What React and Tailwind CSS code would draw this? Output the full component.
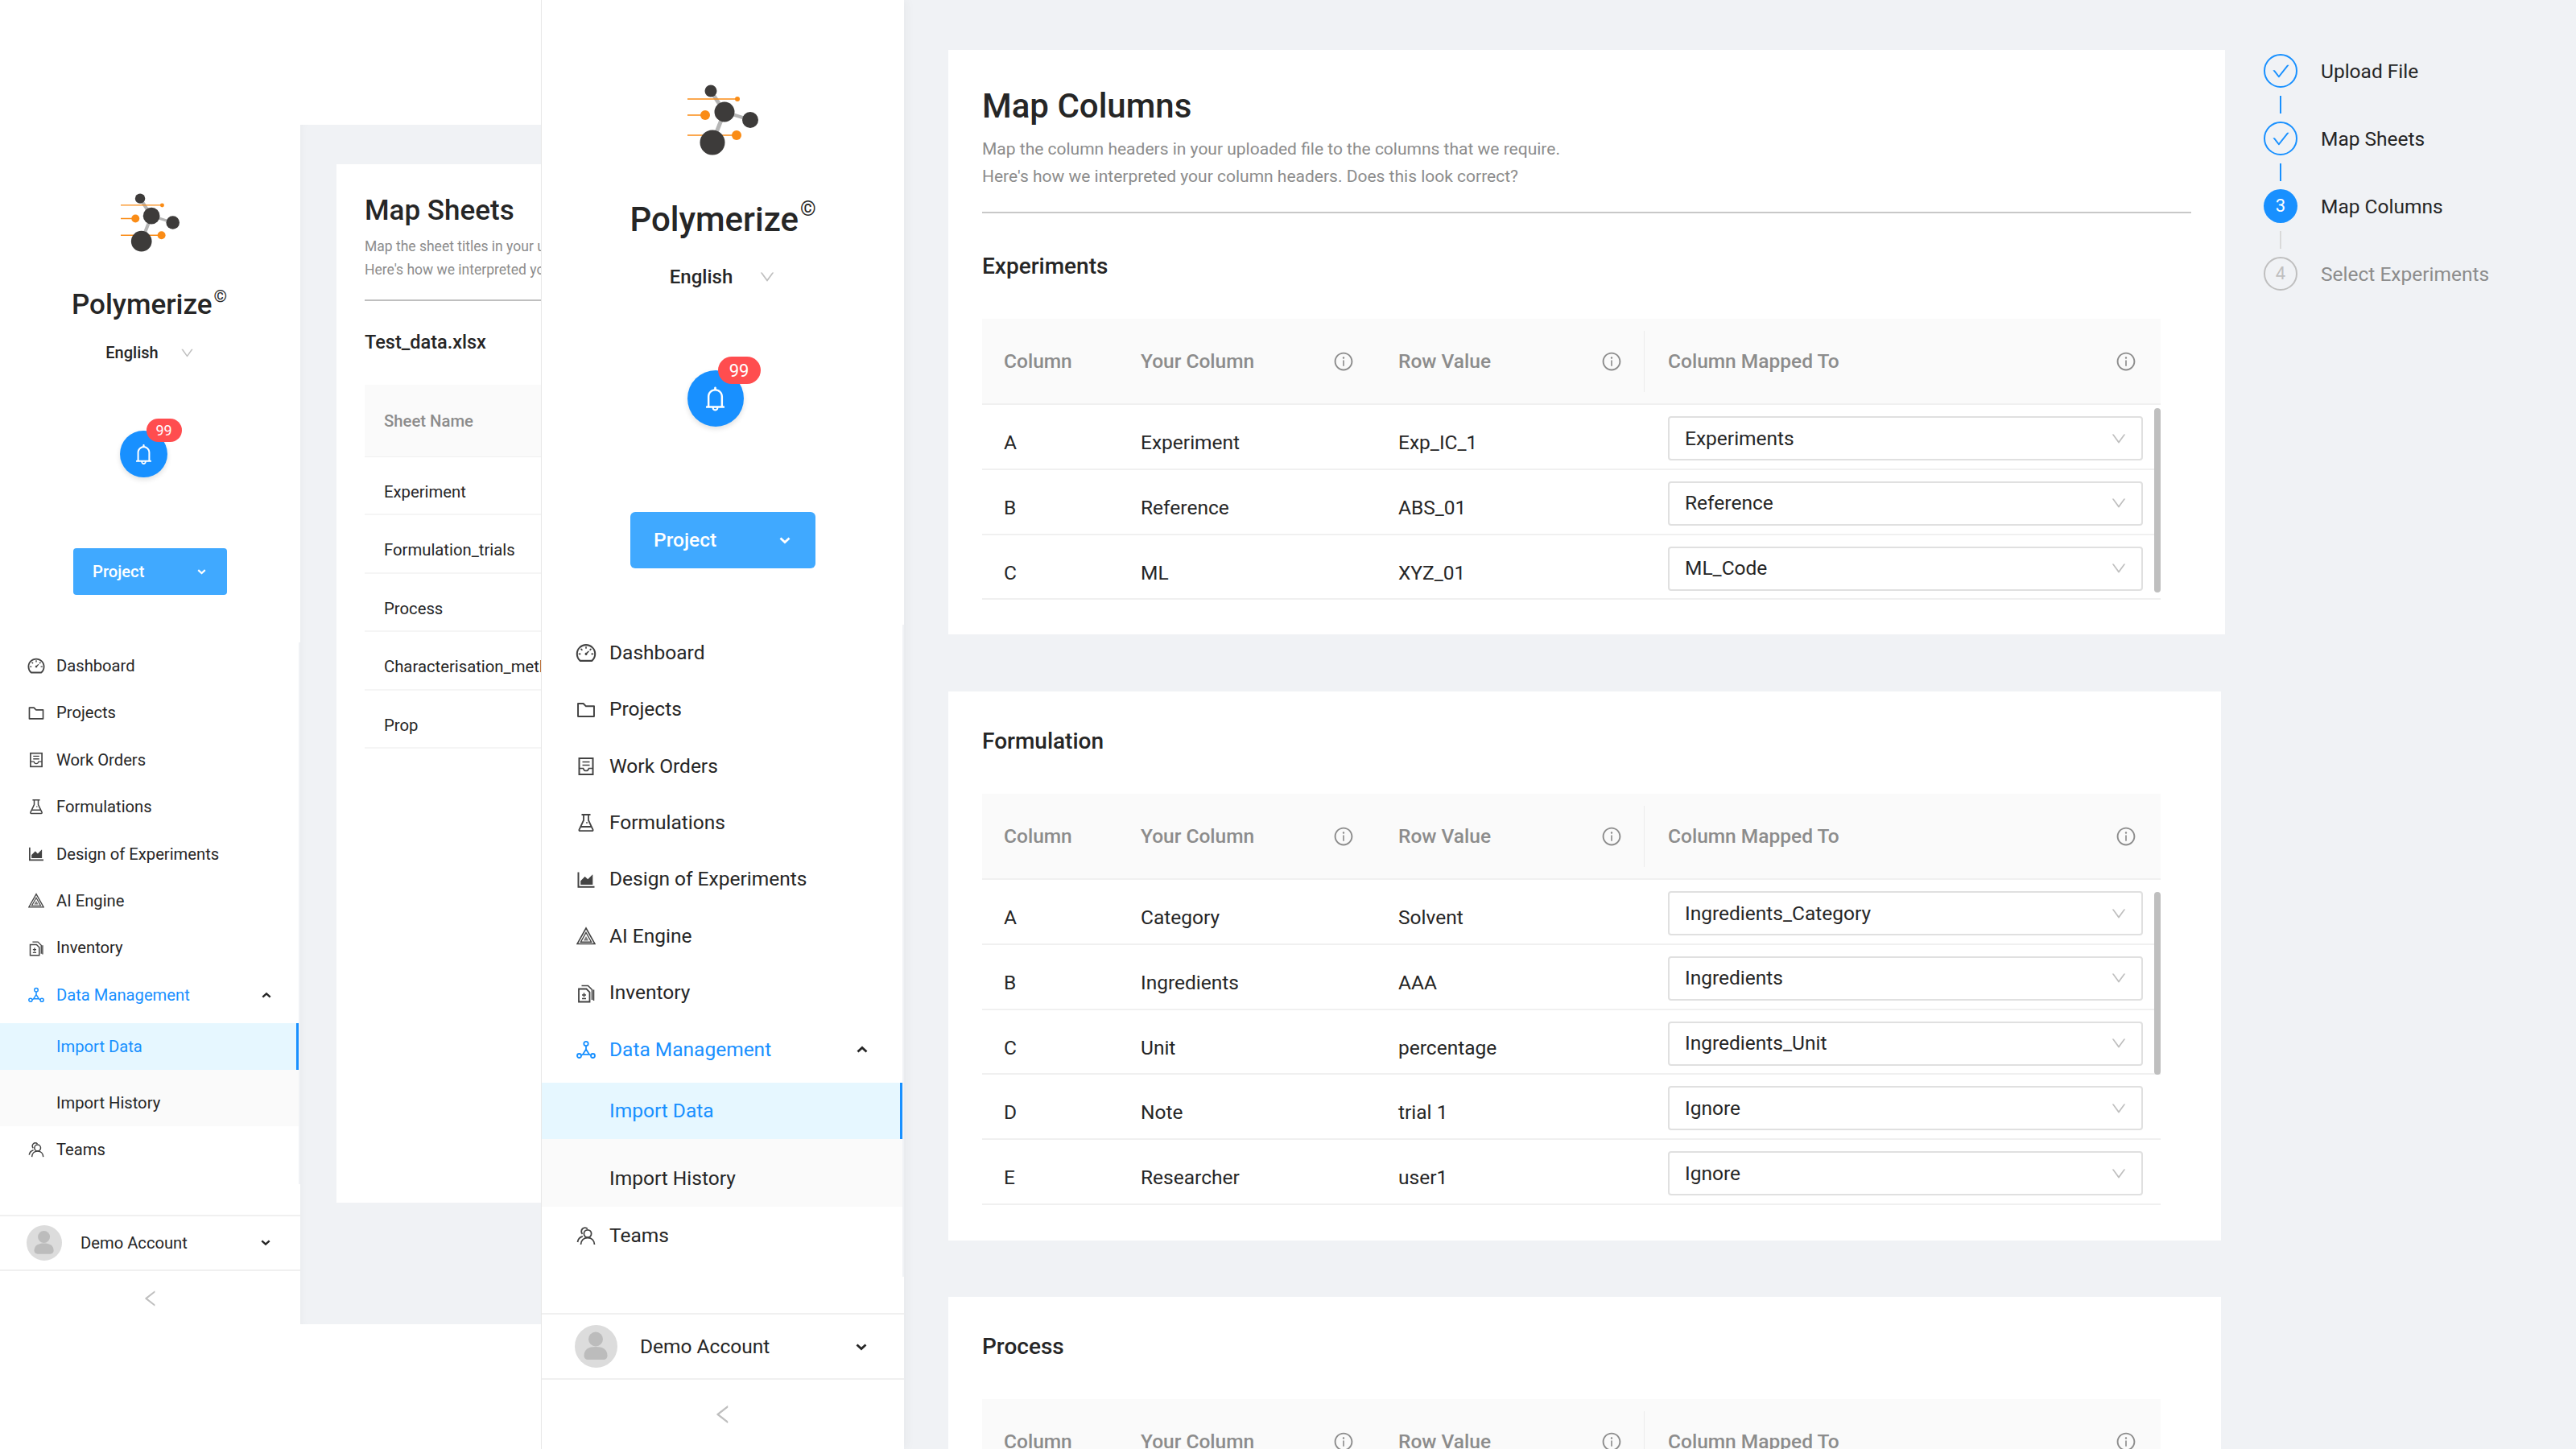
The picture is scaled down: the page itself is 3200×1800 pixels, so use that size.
import {
  AiOutlineAreaChart,
  AiOutlineBell,
  AiOutlineCheck,
  AiOutlineDashboard,
  AiOutlineDown,
  AiOutlineFolder,
  AiOutlineInfoCircle,
  AiOutlineLeft,
} from "react-icons/ai";

function Logo({ className }) {
  return (
    <svg viewBox="0 0 88 88" className={className}>
      <path d="M29 8L46 34L31 72" stroke="#b5b5b5" strokeWidth="5" fill="none" />
      <path d="M46 34L78 44" stroke="#b5b5b5" strokeWidth="4" fill="none" />
      <path d="M0 18H62M0 38H22M0 63H61" stroke="#fa8c16" strokeWidth="1.6" fill="none" />
      <circle cx="62" cy="18" r="3" fill="#fa8c16" />
      <circle cx="22" cy="38" r="6" fill="#fa8c16" />
      <circle cx="61" cy="63" r="6" fill="#fa8c16" />
      <circle cx="29" cy="8" r="7.5" fill="#3d3b3a" />
      <circle cx="46" cy="34" r="12.5" fill="#3d3b3a" />
      <circle cx="78" cy="44" r="10" fill="#3d3b3a" />
      <circle cx="31" cy="72" r="15.5" fill="#3d3b3a" />
    </svg>
  );
}

function WorkOrderIcon({ size }) {
  return (
    <svg width={size} height={size} viewBox="0 0 24 24" fill="none" stroke="currentColor" strokeWidth="2">
      <rect x="3.500" y="2" width="17" height="20" />
      <path d="M7.500 6.500h9M7.500 10.500h9" strokeWidth="1.600" />
      <path d="M3.500 14.500h5c.5 2 1.700 3 3.500 3s3-1 3.500-3h5" strokeWidth="1.600" />
    </svg>
  );
}

function FlaskIcon({ size }) {
  return (
    <svg width={size} height={size} viewBox="0 0 24 24" fill="none" stroke="currentColor" strokeWidth="1.800">
      <path d="M6.500 2h11M9 2v7L3.500 20.500c-.4 1 .2 1.700 1 1.700h15c.8 0 1.400-.7 1-1.700L15 9V2M6 17h12" />
      <circle cx="13" cy="12" r="0.900" fill="currentColor" stroke="none" />
    </svg>
  );
}

function PyramidIcon({ size }) {
  return (
    <svg width={size} height={size} viewBox="0 0 24 24" fill="none" stroke="currentColor">
      <path d="M12 2L23 21.500H1Z" strokeWidth="1.600" />
      <path d="M12 7.500L18.600 19.200H5.400Z" strokeWidth="1.400" />
      <path d="M12 12L15.200 17.500H8.800Z" fill="currentColor" stroke="none" opacity="0.7" />
    </svg>
  );
}

function InventoryIcon({ size }) {
  return (
    <svg width={size} height={size} viewBox="0 0 24 24" fill="none" stroke="currentColor" strokeWidth="1.600">
      <path d="M3 6.500h9.500l4 4V22.500H3Z" strokeWidth="1.800" />
      <path d="M9.500 11.500v5M7 14h5M7 18.500h5" />
      <path d="M6.500 2.500h8l5 5V20" />
      <path d="M21.500 7.500V21" />
    </svg>
  );
}

function NetworkIcon({ size }) {
  return (
    <svg width={size} height={size} viewBox="0 0 24 24" fill="none" stroke="currentColor" strokeWidth="1.800">
      <circle cx="12" cy="4.500" r="2.700" />
      <circle cx="3.500" cy="19.500" r="2.500" />
      <circle cx="20.500" cy="19.500" r="2.500" />
      <path d="M12 7.200V11.500M12 11.500L16 17.800H8ZM6 19L8 17.800M18 19L16 17.800" />
    </svg>
  );
}

function TeamIcon({ size }) {
  return (
    <svg width={size} height={size} viewBox="0 0 24 24" fill="none" stroke="currentColor" strokeWidth="1.800">
      <circle cx="14" cy="9.500" r="4.600" />
      <path d="M5.500 23c.3-5 3.600-8.500 8.500-8.500s8.200 3.500 8.500 8.500" />
      <path d="M7.500 9.800A4.300 4.300 0 1 1 13.800 3.500M7.800 12.800C4 13.800 2 16.500 1.500 20" />
    </svg>
  );
}

function BoldChevron({ up, className }) {
  return (
    <svg viewBox="0 0 14 9" className={className} fill="none" stroke="currentColor" strokeWidth="2.800">
      <path d={up ? "M1.500 7.500L7 2.500L12.500 7.500" : "M1.500 1.500L7 6.500L12.500 1.500"} />
    </svg>
  );
}

function Avatar({ className }) {
  return (
    <svg viewBox="0 0 53 53" className={className}>
      <circle cx="26.500" cy="26.500" r="26.500" fill="#dcdcdc" />
      <circle cx="26" cy="17.500" r="9" fill="#bcbcbc" />
      <path d="M11.500 38c0-8 6-11 14.500-11s14.500 3 14.500 11c0 3-2 5-5 5h-19c-3 0-5-2-5-5Z" fill="#bcbcbc" />
    </svg>
  );
}

// the antd outline icons sit inside a padded 1024 box, so they get drawn a bit larger
const navItems = [
  { label: "Dashboard", Icon: AiOutlineDashboard, padded: true },
  { label: "Projects", Icon: AiOutlineFolder, padded: true },
  { label: "Work Orders", Icon: WorkOrderIcon },
  { label: "Formulations", Icon: FlaskIcon },
  { label: "Design of Experiments", Icon: AiOutlineAreaChart, padded: true },
  { label: "AI Engine", Icon: PyramidIcon },
  { label: "Inventory", Icon: InventoryIcon },
];

// the two sidebars are the same thing at two zoom levels
const wide = {
  root: "w-[451px] border-l border-[#e8e8e8] pt-[105px] shadow-[5px_0_10px_rgba(0,0,0,0.03)]",
  logo: "w-[88px] h-[88px]",
  title: "mt-[56px] text-[42px] leading-[48px]",
  copy: "text-[25px] leading-[26px] ml-[2px] -mt-[2px]",
  lang: "mt-[31px] text-[24px] leading-[32px] gap-[32px]",
  langChevron: "w-[22px] h-[22px]",
  bell: "mt-[100px] w-[70px] h-[70px] mr-[19px]",
  bellIcon: "w-[35px] h-[35px]",
  badge: "left-[38px] -top-[17px] w-[53px] h-[34px] text-[22px]",
  project: "mt-[106px] w-[230px] h-[70px] pl-[29px] pr-[31px] text-[24.500px] rounded-[6px]",
  projectChevron: "w-[14px] h-[9px]",
  nav: "mt-[70px] h-[811px] text-[24.500px]",
  row: "h-[70.400px] pl-[43px] gap-[17px]",
  groupChevron: "ml-[89px] w-[14px] h-[9px]",
  sub: "h-[70px] pl-[84px] mt-[6px] border-r-[3px]",
  subHistory: "h-[84px] pl-[84px] pt-[14px]",
  teams: "pt-[2px]",
  user: "mt-[45px] h-[83px] pl-[41px] pt-[2px] text-[24.500px] border-y-2",
  avatar: "w-[53px] h-[53px] -mt-[2px]",
  userName: "ml-[28px] w-[268px]",
  userChevron: "w-[14px] h-[9px]",
  back: "h-[86px]",
  backIcon: "w-[30px] h-[30px]",
  icon: 24,
  paddedIcon: 28,
  paddedGap: "-mx-[2px]",
};

const narrow = {
  root: "w-[373px] pt-[240px]",
  logo: "w-[73px] h-[73px]",
  title: "mt-[46px] text-[35px] leading-[40px] -ml-[2px]",
  copy: "text-[21px] leading-[22px] ml-[2px] -mt-[2px]",
  lang: "mt-[26px] text-[20px] leading-[27px] gap-[26px]",
  langChevron: "w-[19px] h-[19px]",
  bell: "mt-[83px] w-[59px] h-[58px] mr-[17px]",
  bellIcon: "w-[29px] h-[29px]",
  badge: "left-[33px] -top-[15px] w-[44px] h-[29px] text-[18px]",
  project: "mt-[88px] w-[191px] h-[58px] pl-[24px] pr-[26px] text-[20.200px] rounded-[4px]",
  projectChevron: "w-[11px] h-[7px]",
  nav: "mt-[59px] h-[673px] text-[20.200px]",
  row: "h-[58.400px] pl-[35px] gap-[15px]",
  groupChevron: "ml-[74px] w-[12px] h-[8px]",
  sub: "h-[58px] pl-[70px] mt-[6px] border-r-[3px]",
  subHistory: "h-[70px] pl-[70px] pt-[12px]",
  teams: "",
  user: "mt-[38px] h-[70px] pl-[33px] text-[20.200px] border-y-2",
  avatar: "w-[44px] h-[44px]",
  userName: "ml-[23px] w-[224px]",
  userChevron: "w-[12px] h-[8px]",
  back: "h-[67px]",
  backIcon: "w-[26px] h-[26px]",
  icon: 20,
  paddedIcon: 24,
  paddedGap: "-mx-[2px]",
};

function Sidebar({ s }) {
  return (
    <aside className={`relative z-10 shrink-0 h-full bg-white flex flex-col ${s.root}`}>
      <div className="flex flex-col items-center">
        <Logo className={s.logo} />
        <div className={`flex items-start text-[#262626] font-medium ${s.title}`}>
          Polymerize
          <span className={`font-normal ${s.copy}`}>©</span>
        </div>
        <div className={`flex items-center text-[#262626] font-medium ${s.lang}`}>
          English
          <AiOutlineDown className={`text-[#bfbfbf] ${s.langChevron}`} />
        </div>
        <div className={`relative rounded-full bg-[#1890ff] flex items-center justify-center shadow-[0_3px_6px_rgba(0,0,0,0.12)] ${s.bell}`}>
          <AiOutlineBell className={`text-white ${s.bellIcon}`} />
          <div className={`absolute rounded-full bg-[#ff4d4f] text-white flex items-center justify-center ${s.badge}`}>99</div>
        </div>
        <div className={`bg-[#40a9ff] text-white font-medium flex items-center justify-between ${s.project}`}>
          Project
          <BoldChevron className={s.projectChevron} />
        </div>
      </div>

      <nav className={`border-r-2 border-[#f0f2f5] text-[#262626] ${s.nav}`}>
        {navItems.map(({ label, Icon, padded }) => (
          <div key={label} className={`flex items-center ${s.row}`}>
            <span className={`text-[#434343] flex ${padded ? s.paddedGap : ""}`}>
              <Icon size={padded ? s.paddedIcon : s.icon} />
            </span>
            {label}
          </div>
        ))}
        <div className={`flex items-center text-[#1890ff] ${s.row}`}>
          <NetworkIcon size={s.icon} />
          <span className="whitespace-nowrap">Data Management</span>
          <BoldChevron up className={`text-[#262626] shrink-0 ${s.groupChevron}`} />
        </div>
        <div className={`flex items-center bg-[#e6f7ff] text-[#1890ff] border-[#1890ff] ${s.sub}`}>Import Data</div>
        <div className={`flex items-center bg-[#fafafa] ${s.subHistory}`}>Import History</div>
        <div className={`flex items-center ${s.row} ${s.teams}`}>
          <span className="text-[#434343] flex">
            <TeamIcon size={s.icon} />
          </span>
          Teams
        </div>
      </nav>

      <div className={`flex items-center text-[#262626] border-[#f0f0f0] ${s.user}`}>
        <Avatar className={s.avatar} />
        <span className={s.userName}>Demo Account</span>
        <BoldChevron className={s.userChevron} />
      </div>
      <div className={`flex items-center justify-center ${s.back}`}>
        <AiOutlineLeft className={`text-[#bfbfbf] ${s.backIcon}`} />
      </div>
    </aside>
  );
}

const sheetNames = ["Experiment", "Formulation_trials", "Process", "Characterisation_methods", "Prop"];

function MapSheetsPreview() {
  return (
    <div className="flex-1 min-w-0">
      <div className="h-[155px] bg-white" />
      <div className="h-[1490px] bg-[#f0f2f5] pt-[49px] pl-[45px] overflow-hidden shadow-[inset_8px_0_10px_-6px_rgba(0,0,0,0.03)]">
        <div className="h-[1290px] w-[700px] bg-white pl-[35px] pt-[38px] whitespace-nowrap">
          <h2 className="text-[35px] leading-[40px] font-medium text-[#262626]">Map Sheets</h2>
          <p className="mt-[10px] text-[17.500px] leading-[29px] text-[#8c8c8c]">
            Map the sheet titles in your uploaded file to the sheets that we require.
            <br />
            Here's how we interpreted your sheet titles. Does this look correct?
          </p>
          <div className="mt-[22px] border-t-2 border-[#bfbfbf]" />
          <div className="mt-[36px] text-[23.500px] leading-[30px] font-medium text-[#262626]">Test_data.xlsx</div>
          <div className="mt-[38px] h-[90px] pt-[2px] bg-[#fafafa] border-b border-[#f0f0f0] pl-[24px] flex items-center text-[20.300px] font-medium text-[#8c8c8c]">
            Sheet Name
          </div>
          {sheetNames.map((name) => (
            <div key={name} className="h-[72.400px] border-b-2 border-[#f5f5f5] pl-[24px] pt-[30px] text-[20.300px] leading-[26px] text-[#262626]">
              {name}
            </div>
          ))}
        </div>
      </div>
    </div>
  );
}

function HeaderCell({ label, info, className }) {
  return (
    <div className={`flex items-center justify-between pl-[27px] ${className}`}>
      <span className="pt-[2px]">{label}</span>
      {info && <AiOutlineInfoCircle className="w-[26px] h-[26px] text-[#8c8c8c] shrink-0" />}
    </div>
  );
}

function MappingTable({ rows, barClass, headerMargin }) {
  return (
    <div className={`w-[1464px] ${headerMargin}`}>
      <div className="grid grid-cols-[170px_320px_335px_639px] h-[107px] bg-[#fafafa] border-b-2 border-[#f0f0f0] text-[24.500px] font-medium text-[#8c8c8c]">
        <HeaderCell label="Column" />
        <HeaderCell label="Your Column" info className="pr-[28px]" />
        <HeaderCell label="Row Value" info className="pr-[30px]" />
        <div className="relative flex items-center">
          <div className="absolute -left-[3px] top-[15px] h-[76px] w-px bg-[#ececec]" />
          <HeaderCell label="Column Mapped To" info className="w-full pr-[30px]" />
        </div>
      </div>
      <div className="relative">
        {rows.map((row) => (
          <div key={row[0]} className="grid grid-cols-[170px_320px_335px_639px] h-[80.800px] border-b-2 border-[#f0f0f0] text-[24.500px] leading-[28px] text-[#262626]">
            <div className="pl-[27px] pt-[33px]">{row[0]}</div>
            <div className="pl-[27px] pt-[33px]">{row[1]}</div>
            <div className="pl-[27px] pt-[33px]">{row[2]}</div>
            <div className="pl-[27px] pr-[22px] pt-[14px]">
              <div className="h-[55px] border-2 border-[#e0e0e0] rounded-[4px] pl-[19px] pr-[17px] flex items-center justify-between">
                {row[3]}
                <AiOutlineDown className="w-[22px] h-[22px] text-[#bfbfbf]" />
              </div>
            </div>
          </div>
        ))}
        <div className={`absolute right-0 w-[8px] rounded-full bg-[#bfbfbf] ${barClass}`} />
      </div>
    </div>
  );
}

const experimentRows = [
  ["A", "Experiment", "Exp_IC_1", "Experiments"],
  ["B", "Reference", "ABS_01", "Reference"],
  ["C", "ML", "XYZ_01", "ML_Code"],
];

const formulationRows = [
  ["A", "Category", "Solvent", "Ingredients_Category"],
  ["B", "Ingredients", "AAA", "Ingredients"],
  ["C", "Unit", "percentage", "Ingredients_Unit"],
  ["D", "Note", "trial 1", "Ignore"],
  ["E", "Researcher", "user1", "Ignore"],
];

const steps = [
  { label: "Upload File", state: "done" },
  { label: "Map Sheets", state: "done" },
  { label: "Map Columns", state: "active", n: 3 },
  { label: "Select Experiments", state: "todo", n: 4 },
];

function Stepper() {
  return (
    <div className="ml-[48px] mt-[67px] shrink-0 text-[24.500px] leading-[30px]">
      {steps.map((step, i) => (
        <div key={step.label}>
          <div className="flex items-center gap-[29px]">
            {step.state === "done" && (
              <div className="w-[42px] h-[42px] rounded-full border-2 border-[#1890ff] flex items-center justify-center">
                <AiOutlineCheck className="w-[25px] h-[25px] text-[#1890ff]" />
              </div>
            )}
            {step.state === "active" && (
              <div className="w-[42px] h-[42px] rounded-full bg-[#1890ff] text-white text-[22px] flex items-center justify-center">{step.n}</div>
            )}
            {step.state === "todo" && (
              <div className="w-[42px] h-[42px] rounded-full border-2 border-[#bfbfbf] text-[#bfbfbf] text-[22px] flex items-center justify-center">{step.n}</div>
            )}
            <span className={`pt-[1px] ${step.state === "todo" ? "text-[#8c8c8c]" : "text-[#262626]"}`}>{step.label}</span>
          </div>
          {i < 3 && <div className={`ml-[20px] my-[10px] w-[2px] h-[22px] ${i < 2 ? "bg-[#1890ff]" : "bg-[#d9d9d9]"}`} />}
        </div>
      ))}
    </div>
  );
}

function App() {
  return (
    <div className="flex w-[3200px] h-[1800px] overflow-hidden bg-white font-['Roboto',sans-serif]">
      <div className="flex w-[672px] h-full shrink-0 overflow-hidden">
        <Sidebar s={narrow} />
        <MapSheetsPreview />
      </div>
      <Sidebar s={wide} />

      <main className="flex-1 h-full bg-[#f0f2f5] pl-[55px] flex items-start">
        <div className="w-[1586px] shrink-0">
          <section className="mt-[62px] h-[726px] bg-white pl-[42px] pr-[42px] pt-[46px]">
            <h1 className="text-[42px] leading-[48px] font-medium text-[#262626]">Map Columns</h1>
            <p className="mt-[12px] text-[21px] leading-[34px] text-[#8c8c8c]">
              Map the column headers in your uploaded file to the columns that we require.
              <br />
              Here's how we interpreted your column headers. Does this look correct?
            </p>
            <div className="mt-[27px] border-t-2 border-[#c8c8c8]" />
            <h2 className="mt-[48px] text-[28px] leading-[36px] font-medium text-[#262626]">Experiments</h2>
            <MappingTable rows={experimentRows} barClass="top-[4px] h-[229px]" headerMargin="mt-[47px]" />
          </section>

          <section className="mt-[71px] w-[1581px] h-[682px] bg-white pl-[42px] pt-[44px]">
            <h2 className="text-[28px] leading-[36px] font-medium text-[#262626]">Formulation</h2>
            <MappingTable rows={formulationRows} barClass="top-[15px] h-[227px]" headerMargin="mt-[47px]" />
          </section>

          <section className="mt-[70px] w-[1581px] h-[400px] bg-white pl-[42px] pt-[44px]">
            <h2 className="text-[28px] leading-[36px] font-medium text-[#262626]">Process</h2>
            <MappingTable rows={[]} barClass="hidden" headerMargin="mt-[47px]" />
          </section>
        </div>
        <Stepper />
      </main>
    </div>
  );
}

export default App;
